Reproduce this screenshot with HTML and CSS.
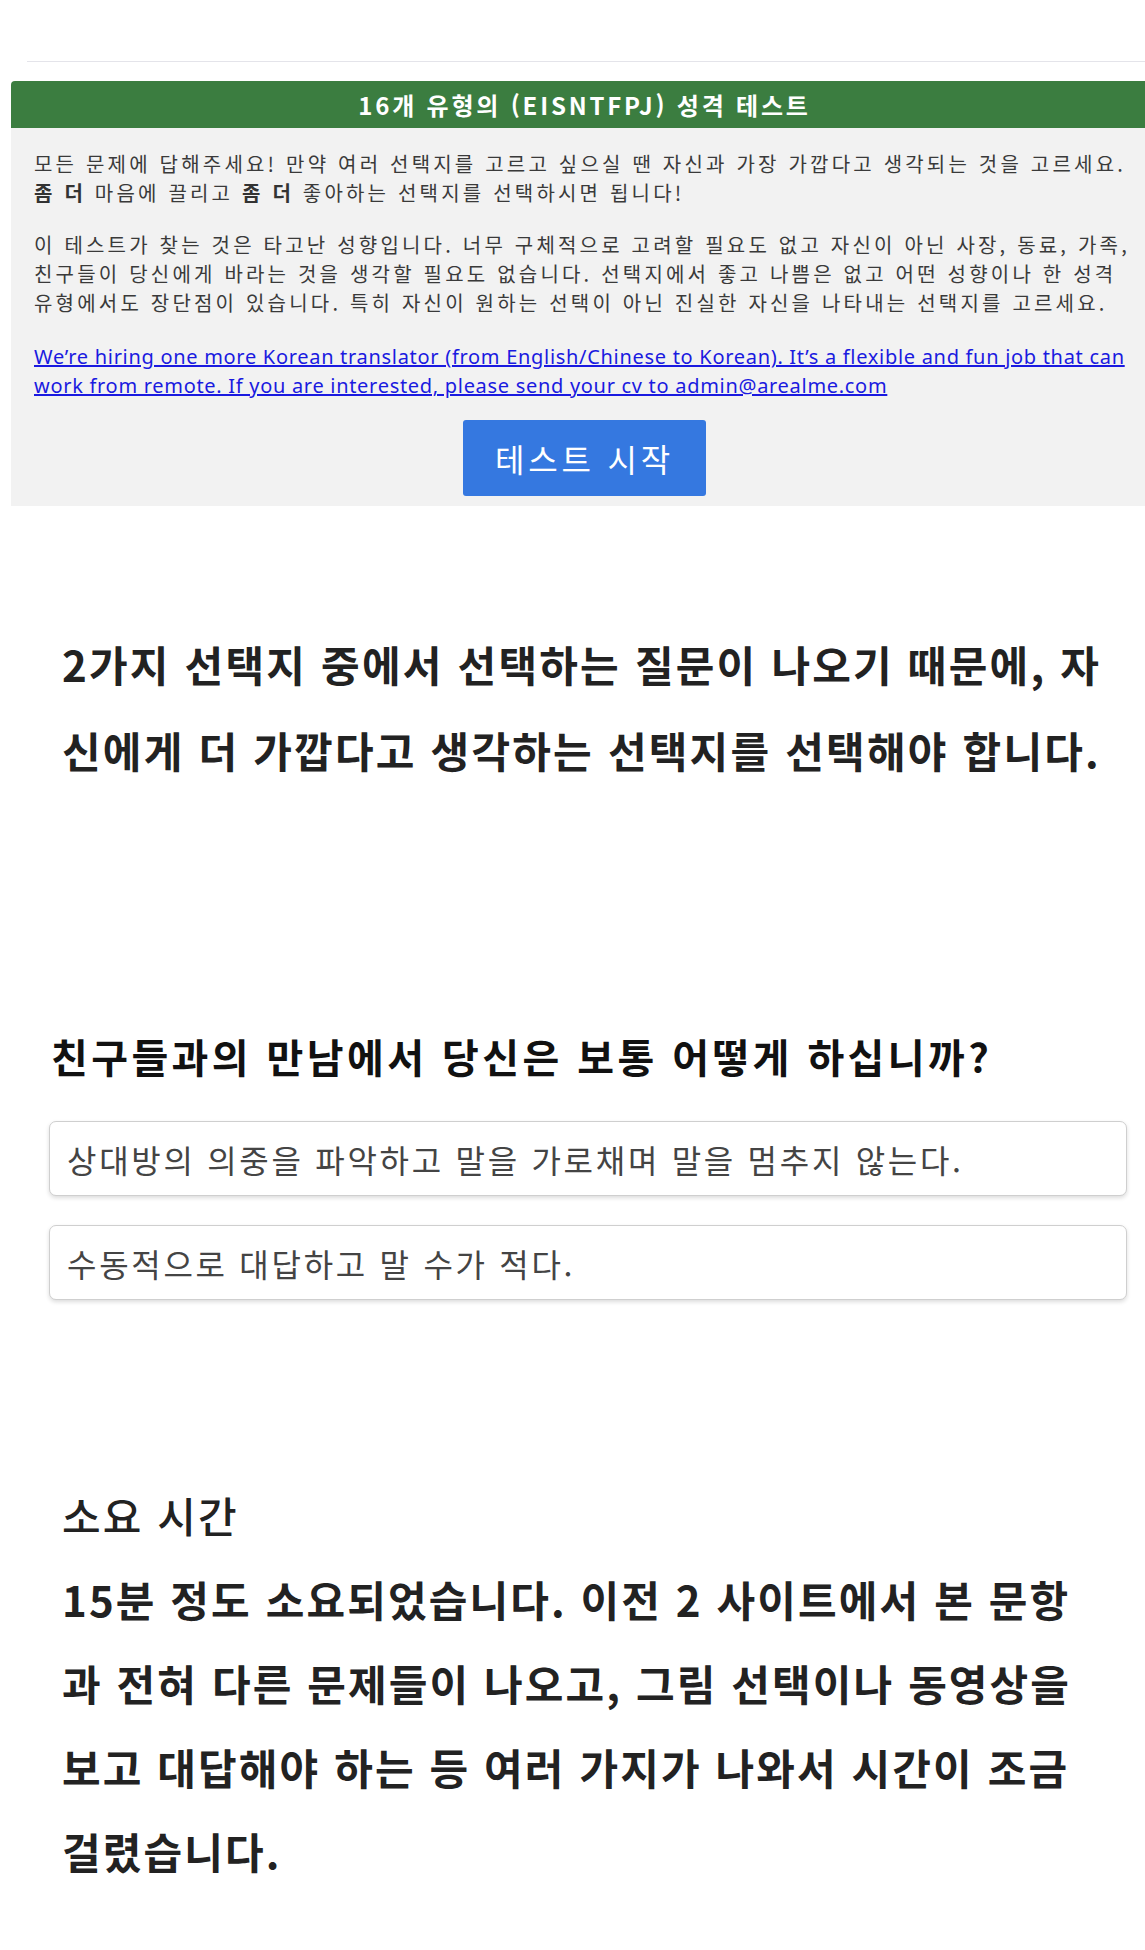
FILE: index.html
```html
<!DOCTYPE html>
<html lang="ko">
<head>
<meta charset="utf-8">
<title>16개 유형의 성격 테스트</title>
<link rel="stylesheet" href="styles.css">
</head>
<body>
<div class="shot">
  <div class="rule"></div>
  <section class="test">
    <h1 class="test-head">16개 유형의 (EISNTFPJ) 성격 테스트</h1>
    <div class="test-body">
      <p class="intro">모든 문제에 답해주세요! 만약 여러 선택지를 고르고 싶으실 땐 자신과 가장 가깝다고 생각되는 것을 고르세요.<br><b>좀 더</b> 마음에 끌리고 <b>좀 더</b> 좋아하는 선택지를 선택하시면 됩니다!</p>
      <p class="intro second">이 테스트가 찾는 것은 타고난 성향입니다. 너무 구체적으로 고려할 필요도 없고 자신이 아닌 사장, 동료, 가족,<br>친구들이 당신에게 바라는 것을 생각할 필요도 없습니다. 선택지에서 좋고 나쁨은 없고 어떤 성향이나 한 성격<br>유형에서도 장단점이 있습니다. 특히 자신이 원하는 선택이 아닌 진실한 자신을 나타내는 선택지를 고르세요.</p>
      <p class="hire"><a href="#">We’re hiring one more Korean translator (from English/Chinese to Korean). It’s a flexible and fun job that can<br>work from remote. If you are interested, please send your cv to admin@arealme.com</a></p>
      <div class="start-wrap"><button class="start" type="button">테스트 시작</button></div>
    </div>
  </section>
</div>
<article class="post">
  <p class="lead">2가지 선택지 중에서 선택하는 질문이 나오기 때문에, 자<br>신에게 더 가깝다고 생각하는 선택지를 선택해야 합니다.</p>
  <div class="quiz">
    <h2 class="quiz-q">친구들과의 만남에서 당신은 보통 어떻게 하십니까?</h2>
    <div class="opt">상대방의 의중을 파악하고 말을 가로채며 말을 멈추지 않는다.</div>
    <div class="opt">수동적으로 대답하고 말 수가 적다.</div>
  </div>
  <h3 class="sub">소요 시간</h3>
  <p class="body-bold">15분 정도 소요되었습니다. 이전 2 사이트에서 본 문항<br>과 전혀 다른 문제들이 나오고, 그림 선택이나 동영상을<br>보고 대답해야 하는 등 여러 가지가 나와서 시간이 조금<br>걸렸습니다.</p>
</article>
</body>
</html>
```

FILE: styles.css
```css
html, body {
  margin: 0;
  padding: 0;
  background: #ffffff;
}

body {
  font-family: "Noto Sans CJK KR", "Noto Sans", sans-serif;
  color: #222222;
}

.shot {
  overflow: hidden;
  width: 100%;
}

.rule {
  margin: 61px 0 19px 27px;
  height: 1px;
  background: #e4e4ea;
}

.test {
  margin-left: 11px;
  width: 1147px;
}

.test-head {
  margin: 0;
  height: 47px;
  display: flex;
  align-items: center;
  justify-content: center;
  background: #3b7d40;
  color: #ffffff;
  font-size: 24px;
  font-weight: 700;
  letter-spacing: 2.8px;
  border-radius: 4px 4px 0 0;
}

.test-body {
  background: #f2f2f2;
  padding: 21px 23px 10px;
  color: #3a3a3a;
  font-size: 20px;
  line-height: 29px;
  letter-spacing: 3.2px;
}

.intro {
  margin: 0;
  white-space: nowrap;
}

.intro b {
  color: #333333;
}

.second {
  margin-top: 23px;
}

.hire {
  margin: 25px 0 0;
  font-family: "Noto Sans", "Noto Sans CJK KR", sans-serif;
  font-size: 20px;
  letter-spacing: 0.7px;
  white-space: nowrap;
}

.hire a {
  color: #1a1ae0;
  text-decoration: underline;
}

.start-wrap {
  display: flex;
  justify-content: center;
  margin-top: 20px;
}

.start {
  width: 243px;
  height: 76px;
  border: none;
  border-radius: 3px;
  background: #3578e0;
  color: #ffffff;
  font-family: "Noto Sans CJK KR", sans-serif;
  font-size: 32px;
  letter-spacing: 3.8px;
  padding: 0;
}

.post {
  padding-left: 62px;
  width: 1060px;
}

.lead {
  margin: 115px 0 0;
  font-size: 42px;
  font-weight: 700;
  line-height: 86px;
  letter-spacing: 2.2px;
  white-space: nowrap;
}

.quiz {
  margin: 238px 0 0 -13px;
  width: 1078px;
}

.quiz-q {
  margin: 0 0 40px 2px;
  font-size: 40px;
  font-weight: 700;
  line-height: 50px;
  letter-spacing: 3.4px;
  color: #111111;
}

.opt {
  height: 75px;
  box-sizing: border-box;
  display: flex;
  align-items: center;
  padding-left: 17px;
  border: 1px solid #cfcfcf;
  border-radius: 7px;
  background: #ffffff;
  box-shadow: 0 2px 4px rgba(0, 0, 0, 0.14);
  color: #444444;
  font-size: 32px;
  letter-spacing: 2.7px;
}

.opt + .opt {
  margin-top: 29px;
}

.sub {
  margin: 173px 0 0;
  font-size: 42px;
  font-weight: 500;
  line-height: 84px;
  letter-spacing: 2.1px;
}

.body-bold {
  margin: 0;
  font-size: 42px;
  font-weight: 700;
  line-height: 84px;
  letter-spacing: 2.1px;
  white-space: nowrap;
}
```
